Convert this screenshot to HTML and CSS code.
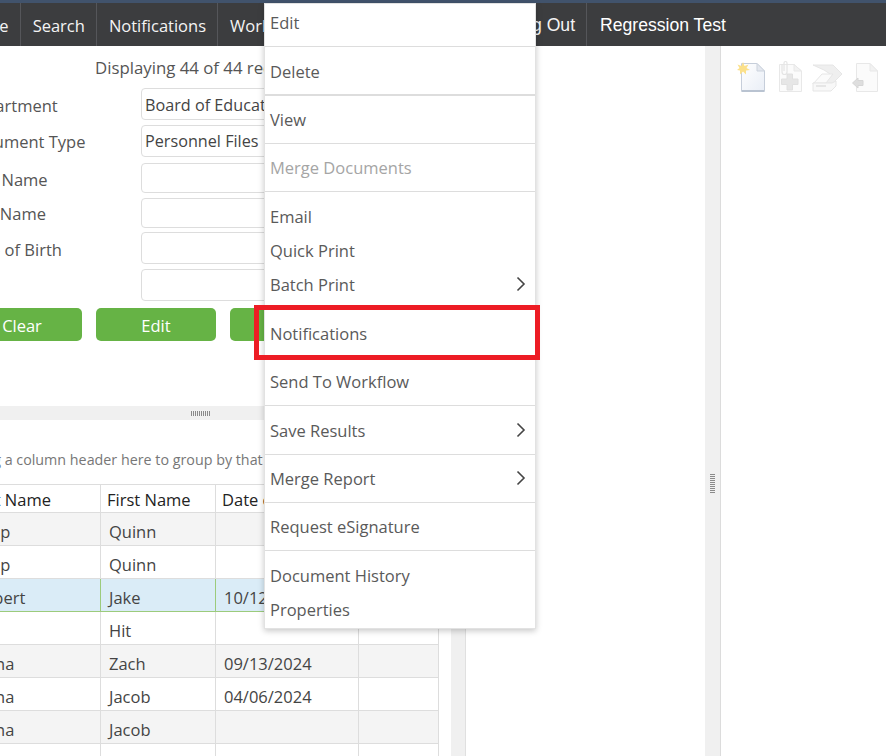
FILE: index.html
```html
<!DOCTYPE html>
<html lang="en">
<head>
<meta charset="utf-8">
<title>Document Search</title>
<link rel="stylesheet" href="styles.css">
</head>
<body>
<div class="app">
  <nav class="nav">
    <a class="nav-item nav-home">Home</a>
    <a class="nav-item">Search</a>
    <a class="nav-item">Notifications</a>
    <a class="nav-item nav-work">Workflow</a>
    <a class="nav-item nav-alt nav-out">Logging Out</a>
    <a class="nav-item nav-alt nav-user">Regression Test</a>
  </nav>
  <main class="main">
    <section class="left">
      <div class="left-inner">
        <p class="count">Displaying 44 of 44 records</p>
        <form class="form">
          <div class="row"><label class="lbl">Department</label><div class="field">Board of Education</div></div>
          <div class="row row-up"><label class="lbl">Document Type</label><div class="field">Personnel Files</div></div>
          <div class="row row-s row-3"><label class="lbl">First Name</label><div class="field"></div></div>
          <div class="row row-s row-up"><label class="lbl">Last Name</label><div class="field"></div></div>
          <div class="row row-5"><label class="lbl">Date of Birth</label><div class="field"></div></div>
          <div class="row"><label class="lbl">SSN</label><div class="field"></div></div>
        </form>
        <div class="buttons">
          <button class="btn" type="button">Clear</button>
          <button class="btn" type="button">Edit</button>
          <button class="btn" type="button">Save</button>
        </div>
      </div>
      <div class="hsplit"><span class="grip-h"></span></div>
      <div class="left-inner grid-wrap">
        <p class="group">Drag a column header here to group by that column</p>
        <table class="grid">
          <colgroup><col class="c1"><col class="c2"><col class="c3"><col class="c4"></colgroup>
          <thead><tr><th>Last Name</th><th>First Name</th><th>Date of Birth</th><th></th></tr></thead>
          <tbody>
            <tr class="alt"><td>Kapp</td><td>Quinn</td><td></td><td></td></tr>
            <tr><td>Kapp</td><td>Quinn</td><td></td><td></td></tr>
            <tr class="sel"><td>Hubert</td><td>Jake</td><td>10/12/2024</td><td></td></tr>
            <tr><td>Hit</td><td>Hit</td><td></td><td></td></tr>
            <tr class="alt"><td>Mena</td><td>Zach</td><td>09/13/2024</td><td></td></tr>
            <tr><td>Mena</td><td>Jacob</td><td>04/06/2024</td><td></td></tr>
            <tr class="alt"><td>Mena</td><td>Jacob</td><td></td><td></td></tr>
            <tr><td></td><td></td><td></td><td></td></tr>
          </tbody>
        </table>
      </div>
    </section>
    <div class="vsplit vsplit-a"></div>
    <section class="middle"></section>
    <div class="vsplit vsplit-b"><span class="grip-v"></span></div>
    <section class="right">
      <div class="tools">
        <svg class="tool" width="27" height="32" viewBox="0 0 27 32">
          <defs>
            <linearGradient id="pg" x1="0" y1="0" x2="1" y2="1"><stop offset="0" stop-color="#ffffff"/><stop offset="1" stop-color="#e9eef6"/></linearGradient>
          </defs>
          <path d="M3.500 3.500H19L26.500 11V31.500H3.500Z" fill="url(#pg)" stroke="#c6cedA"/>
          <path d="M19 3.500V11H26.500Z" fill="#e4e8ef" stroke="#ccd3dd"/>
          <path d="M4 30H26V32H4Z" fill="#b9c3d1"/>
          <path d="M5 2L6.500 6L10.500 4.500L8.500 8L12 10L8 10.500L8 14.500L5 11.500L2 14.500L2 10.500L-1 10L1.500 8L-0.500 4.500L3.500 6Z" fill="#fbe08a"/>
        </svg>
        <svg class="tool tool-add" width="25" height="32" viewBox="0 0 25 32">
          <path d="M1.500 4.500H16L23.500 11V31.500H1.500Z" fill="#fbfbfb" stroke="#e8e8e8"/>
          <path d="M16 4.500V11H23.500Z" fill="#f2f2f2" stroke="#e8e8e8"/>
          <path d="M4 4V12A2.500 2.500 0 0 0 9 12V3A1.500 1.500 0 0 0 6 3V11" fill="none" stroke="#e4e4e4" stroke-width="1.200"/>
          <path d="M9 14H14.500V19H20V24.500H14.500V30H9V24.500H3.500V19H9Z" fill="#e6e6e6" stroke="#e0e0e0"/>
        </svg>
        <svg class="tool" width="31" height="32" viewBox="0 0 31 32">
          <path d="M1 5H21L30 14L21 23H8L18 14L12 10Z" fill="#efefef" stroke="#e6e6e6"/>
          <path d="M1 24L10 14H21L14 23H1Z" fill="#fbfbfb" stroke="#e6e6e6"/>
          <path d="M1 23H20L24 21V26L19 31H1Z" fill="#f8f8f8" stroke="#e6e6e6"/>
          <path d="M4 25H14V27H4Z" fill="#e6e6e6"/>
        </svg>
        <svg class="tool" width="27" height="32" viewBox="0 0 27 32">
          <path d="M4.500 3.500H18L25.500 11V31.500H4.500Z" fill="#fbfbfb" stroke="#e8e8e8"/>
          <path d="M18 3.500V11H25.500Z" fill="#f2f2f2" stroke="#e8e8e8"/>
          <path d="M0.500 23L6 18V20.500H11V25.500H6V28Z" fill="#dedede" stroke="#d6d6d6"/>
        </svg>
      </div>
    </section>
  </main>
  <div class="menu">
    <div class="mgroup mg-first"><div class="mi">Edit</div></div>
    <div class="mgroup mg-thick"><div class="mi">Delete</div></div>
    <div class="mgroup"><div class="mi">View</div></div>
    <div class="mgroup"><div class="mi mi-off">Merge Documents</div></div>
    <div class="mgroup mg-multi">
      <div class="mi">Email</div>
      <div class="mi">Quick Print</div>
      <div class="mi">Batch Print
        <svg class="chev" width="10" height="16" viewBox="0 0 10 16"><path d="M1.500 1.500L8 8L1.500 14.500" fill="none" stroke="#444" stroke-width="1.600"/></svg>
      </div>
    </div>
    <div class="mgroup"><div class="mi">Notifications</div></div>
    <div class="mgroup"><div class="mi">Send To Workflow</div></div>
    <div class="mgroup mg-tall"><div class="mi">Save Results
      <svg class="chev" width="10" height="16" viewBox="0 0 10 16"><path d="M1.500 1.500L8 8L1.500 14.500" fill="none" stroke="#444" stroke-width="1.600"/></svg>
    </div></div>
    <div class="mgroup"><div class="mi">Merge Report
      <svg class="chev" width="10" height="16" viewBox="0 0 10 16"><path d="M1.500 1.500L8 8L1.500 14.500" fill="none" stroke="#444" stroke-width="1.600"/></svg>
    </div></div>
    <div class="mgroup"><div class="mi">Request eSignature</div></div>
    <div class="mgroup mg-last">
      <div class="mi">Document History</div>
      <div class="mi">Properties</div>
    </div>
  </div>
  <div class="callout"></div>
</div>
</body>
</html>
```

FILE: styles.css
```css
* { box-sizing: border-box; }
html, body { margin: 0; padding: 0; }
body {
  width: 886px;
  height: 756px;
  overflow: hidden;
  background: #fff;
  font-family: "Open Sans", "Noto Sans", sans-serif;
  font-size: 16.5px;
  color: #444;
}
.app { position: relative; width: 886px; height: 756px; overflow: hidden; display: flex; flex-direction: column; }

/* top bar */
.nav {
  flex: none;
  height: 46px;
  display: flex;
  background: #3c3d3f;
  border-top: 3px solid #41536c;
  color: #f4f4f4;
  margin-left: -50px;
  white-space: nowrap;
}
.nav-item {
  display: flex;
  align-items: center;
  padding: 2px 11px 0 12px;
  border-right: 1px solid #55565a;
}
.nav-work { width: 130px; }
.nav-alt { font-family: "Liberation Sans", Arial, sans-serif; font-size: 17.6px; }
.nav-out { width: 239px; justify-content: flex-end; }
.nav-user { border-right: 0; color: #fff; padding-top: 1px; padding-left: 13px; }

/* panels */
.main { flex: 1; display: flex; min-height: 0; }
.left { width: 451px; flex: none; overflow: hidden; }
.left-inner { margin-left: -38px; }
.count { margin: 0; padding: 11px 0 0 133px; height: 37px; font-size: 16.8px; line-height: 22px; color: #555; white-space: nowrap; }
.form { padding-left: 2px; }
.row { display: flex; height: 32px; margin-top: 5px; }
.row-s { height: 30px; }
.row-3 { margin-top: 6px; }
.row-5 { margin-top: 4px; }
.lbl { flex: none; width: 177px; display: flex; align-items: center; padding-top: 3px; color: #555; white-space: nowrap; }
.row-up .lbl { padding-top: 1px; }
.field {
  width: 240px;
  border: 1px solid #ddd;
  border-radius: 4px;
  padding: 2px 3px 0;
  display: flex;
  align-items: center;
  font-size: 16.2px;
  color: #444;
  white-space: nowrap;
  overflow: hidden;
}
.row-up .field { padding-top: 0; }
.buttons { display: flex; gap: 14px; margin-top: 7px; }
.btn {
  width: 120px;
  height: 33px;
  border: 0;
  border-radius: 5px;
  background: #66b345;
  color: #fff;
  font: inherit;
  padding: 2px 0 0;
}
.hsplit {
  height: 14px;
  margin-top: 65px;
  background: #f0f0f0;
  display: flex;
  justify-content: flex-start;
  align-items: center;
  padding-left: 191px;
}
.grip-h {
  width: 19px;
  height: 5px;
  background: repeating-linear-gradient(90deg, #8a8a8a 0 1px, transparent 1px 2px);
}
.group { margin: 0; padding: 29px 0 0 7px; height: 64px; font-size: 14.3px; line-height: 22px; color: #777; white-space: nowrap; }
.grid {
  table-layout: fixed;
  width: 476px;
  border-collapse: collapse;
  color: #444;
}
.c1 { width: 138px; }
.c2 { width: 115px; }
.c3 { width: 143px; }
.c4 { width: 80px; }
.grid th, .grid td { border: 1px solid #ddd; white-space: nowrap; overflow: hidden; text-align: left; }
.grid th { height: 28px; padding: 2px 6px 0; font-weight: 400; color: #222; }
.grid td { height: 33px; padding: 5px 8px 0; }
.alt td { background: #f4f4f4; }
.sel td { background: #daecf7; border-color: #9ccb7c; }
.vsplit { flex: none; background: #f0f0f0; }
.vsplit-a { width: 15px; border-right: 1px solid #e0e0e0; }
.middle { width: 239px; flex: none; }
.vsplit-b {
  width: 16px;
  border-right: 1px solid #dcdcdc;
  display: flex;
  align-items: center;
  justify-content: center;
}
.grip-v {
  width: 5px;
  height: 19px;
  margin-top: 165px;
  background: repeating-linear-gradient(0deg, #8a8a8a 0 1px, transparent 1px 2px);
}
.right { flex: 1; min-width: 0; }
.tools { display: flex; padding: 14px 0 0 17px; gap: 9px; align-items: flex-start; }
.tool { display: block; flex: none; overflow: visible; }
.tool-add { margin-left: 4px; }

/* context menu */
.menu {
  position: absolute;
  left: 264px;
  top: 3px;
  width: 272px;
  height: 626px;
  background: #fff;
  border: 1px solid #e2e2e2;
  box-shadow: 0 2px 6px rgba(0, 0, 0, .22);
  color: #5a5a5a;
}
.mgroup { padding: 7px 0 6px; border-bottom: 1px solid #ddd; }
.mg-first { padding: 2px 0 6px; }
.mg-thick { border-bottom: 2px solid #ddd; padding: 8px 0 5px; }
.mg-multi { padding: 8px 0 7px; }
.mg-tall { padding-top: 8px; }
.mg-last { border-bottom: 0; padding: 8px 0 0; }
.mi { height: 34px; display: flex; align-items: center; justify-content: space-between; padding: 0 9px 2px 5px; }
.mi-off { color: #a5a5a5; }
.chev { flex: none; }

.callout {
  position: absolute;
  left: 254px;
  top: 305px;
  width: 286px;
  height: 55px;
  border: 5px solid #ed1c24;
}
```
